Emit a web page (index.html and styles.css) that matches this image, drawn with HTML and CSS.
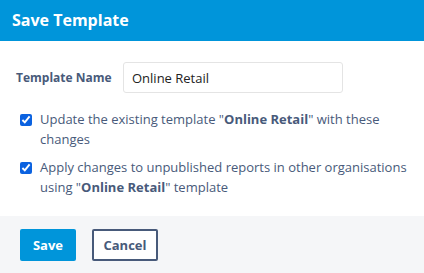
FILE: index.html
```html
<!DOCTYPE html>
<html lang="en">
<head>
    <meta charset="UTF-8">
    <title>Save Template</title>
    <link rel="stylesheet" href="styles.css">
</head>
<body>
    <div class="modal">
        <div class="modal-header">Save Template</div>
        <div class="modal-body">
            <div class="field">
                <label for="name">Template Name</label>
                <input type="text" id="name" value="Online Retail">
            </div>
            <label class="check">
                <input type="checkbox" checked>
                <span>Update the existing template "<b>Online Retail</b>" with these changes</span>
            </label>
            <label class="check">
                <input type="checkbox" checked>
                <span>Apply changes to unpublished reports in other organisations using "<b>Online Retail</b>" template</span>
            </label>
        </div>
        <div class="modal-footer">
            <button class="btn btn-primary">Save</button>
            <button class="btn btn-outline">Cancel</button>
        </div>
    </div>
</body>
</html>
```
FILE: styles.css
```css
body {
    margin: 0;
    font-family: 'Open Sans', 'Noto Sans', sans-serif;
    color: #485a7a;
    background: #fff;
}
.modal {
    width: 424px;
    height: 273px;
    display: flex;
    flex-direction: column;
}
.modal-header {
    background-color: #0095da;
    color: white;
    font-weight: 700;
    font-size: 16px;
    height: 41px;
    line-height: 41px;
    padding: 0 12px;
}
.modal-body {
    flex: 1;
    padding: 21px 16px 0 20px;
}
.field {
    display: flex;
    align-items: center;
    margin-bottom: 16px;
}
.field label {
    font-size: 12px;
    font-weight: 700;
    width: 107px;
    margin-left: -4px;
}
.field input {
    width: 220px;
    height: 31px;
    box-sizing: border-box;
    border: 1px solid #e4e4e4;
    border-radius: 3px;
    padding: 0 8px;
    font-family: inherit;
    font-size: 13px;
    color: #222;
}
.check {
    display: flex;
    align-items: flex-start;
    font-size: 13px;
    line-height: 20px;
    margin-bottom: 8px;
}
.check input {
    width: 12px;
    height: 12px;
    margin: 5px 8px 0 0;
    flex-shrink: 0;
    accent-color: #0b62e0;
}
.check b {
    font-weight: 700;
}
.modal-footer {
    background: #f5f6f8;
    height: 57px;
    flex-shrink: 0;
    display: flex;
    align-items: center;
    gap: 16px;
    padding: 0 20px;
}
.btn {
    height: 32px;
    font-family: inherit;
    font-size: 13px;
    font-weight: 700;
    border-radius: 2px;
    cursor: pointer;
}
.btn-primary {
    width: 56px;
    background: #0095da;
    color: white;
    border: none;
}
.btn-outline {
    width: 66px;
    background: white;
    color: #485a7a;
    border: 2px solid #485a7a;
}
```
